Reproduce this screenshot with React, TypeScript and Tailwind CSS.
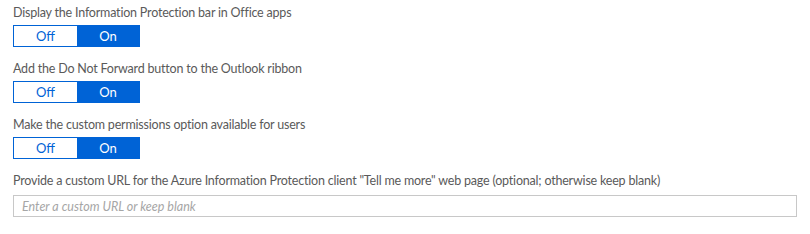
import { useState } from "react";

function Toggle({ defaultOn = true }: { defaultOn?: boolean }) {
  const [on, setOn] = useState(defaultOn);
  return (
    <div className="mt-[3px] flex h-[22px] w-[127px] border border-[#0063d6]">
      <button
        type="button"
        onClick={() => setOn(false)}
        className={`flex w-[63px] items-center justify-center text-[13px] leading-none ${
          on ? "bg-white text-[#0063d6]" : "bg-[#0063d6] text-white"
        }`}
      >
        Off
      </button>
      <button
        type="button"
        onClick={() => setOn(true)}
        className={`flex flex-1 items-center justify-center text-[13px] leading-none ${
          on ? "bg-[#0063d6] text-white" : "bg-white text-[#0063d6]"
        }`}
      >
        On
      </button>
    </div>
  );
}

const settings = [
  "Display the Information Protection bar in Office apps",
  "Add the Do Not Forward button to the Outlook ribbon",
  "Make the custom permissions option available for users",
];

export default function App() {
  return (
    <div
      className="h-[234px] w-[810px] bg-white px-[13px] pt-[4px] text-[#5a5a5a]"
      style={{ fontFamily: 'Lato, "Open Sans", sans-serif' }}
    >
      {settings.map((label) => (
        <div key={label} className="mb-[13px]">
          <div className="text-[12.5px] leading-[18px] tracking-[-0.2px]">{label}</div>
          <Toggle />
        </div>
      ))}
      <div>
        <div className="text-[12.5px] leading-[18px] tracking-[-0.2px]">
          Provide a custom URL for the Azure Information Protection client "Tell me more" web page (optional; otherwise keep blank)
        </div>
        <input
          type="text"
          placeholder="Enter a custom URL or keep blank"
          className="mt-[5px] h-[22px] w-full border border-[#c8c8c8] px-[8px] text-[12.5px] text-[#333] outline-none placeholder:italic placeholder:text-[#a6a6a6]"
        />
      </div>
    </div>
  );
}
